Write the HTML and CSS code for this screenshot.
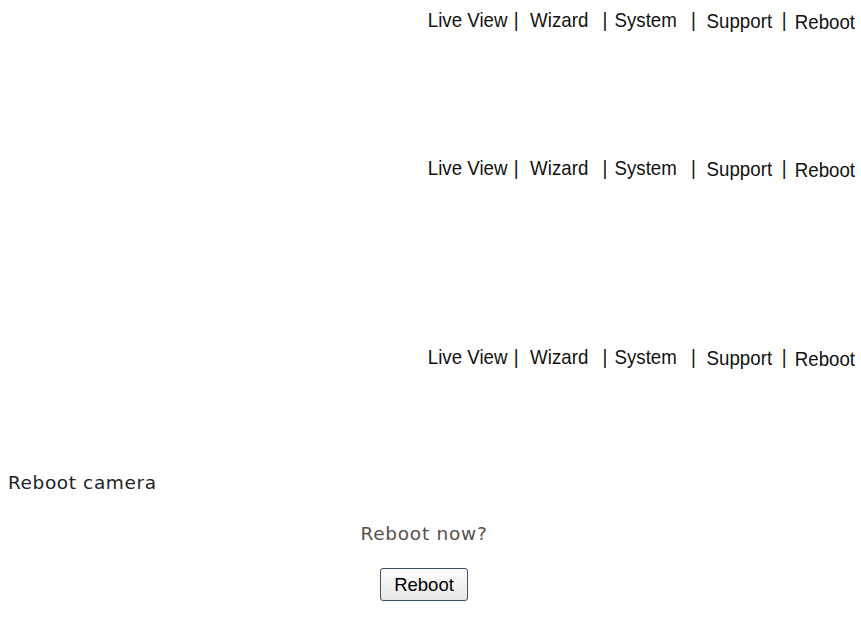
FILE: index.html
```html
<!DOCTYPE html>
<html>
<head>
<meta charset="utf-8">
<title>Reboot</title>
<link rel="stylesheet" href="styles.css">
</head>
<body>
<div class="nav nav-1">
  <div class="nav-inner">
    <span class="item i1">Live View</span><span class="sep s1">|</span><span class="item i2">Wizard</span><span class="sep s2">|</span><span class="item i3">System</span><span class="sep s3">|</span><span class="item i4">Support</span><span class="sep s4">|</span><span class="item i5">Reboot</span>
  </div>
</div>
<div class="nav nav-2">
  <div class="nav-inner">
    <span class="item i1">Live View</span><span class="sep s1">|</span><span class="item i2">Wizard</span><span class="sep s2">|</span><span class="item i3">System</span><span class="sep s3">|</span><span class="item i4">Support</span><span class="sep s4">|</span><span class="item i5">Reboot</span>
  </div>
</div>
<div class="nav nav-3">
  <div class="nav-inner">
    <span class="item i1">Live View</span><span class="sep s1">|</span><span class="item i2">Wizard</span><span class="sep s2">|</span><span class="item i3">System</span><span class="sep s3">|</span><span class="item i4">Support</span><span class="sep s4">|</span><span class="item i5">Reboot</span>
  </div>
</div>
<div class="title">Reboot camera</div>
<div class="confirm">
  <div class="question">Reboot now?</div>
  <button class="btn" type="button">Reboot</button>
</div>
</body>
</html>
```

FILE: styles.css
```css
html, body {
  margin: 0;
  padding: 0;
  background: #fff;
}
body {
  padding: 0 6px 0 8px;
  font-family: "Liberation Sans", Arial, sans-serif;
}
.nav {
  display: flex;
  justify-content: flex-end;
  height: 28px;
}
.nav-inner {
  display: flex;
  align-items: flex-start;
  flex: none;
  font-family: "Liberation Sans", Arial, sans-serif;
  font-size: 21px;
  line-height: 24px;
  color: #111;
  white-space: nowrap;
  transform: scaleX(0.89);
  transform-origin: right center;
}
.nav-1 { margin-top: 8px; }
.nav-2 { margin-top: 120px; }
.nav-3 { margin-top: 161px; }
.s1 { margin: 0 13px 0 7px; }
.s2 { margin: 0 8px 0 16px; }
.s3 { margin: 0 12px 0 16px; }
.s4 { margin: 0 9px 0 11px; }
.i4 { margin-top: 1px; }
.i5 { margin-top: 2px; }
.title {
  margin-top: 99px;
  font-family: "DejaVu Sans", Verdana, sans-serif;
  font-size: 18.5px;
  line-height: 22px;
  letter-spacing: 0.6px;
  color: #222;
}
.confirm {
  display: flex;
  flex-direction: column;
  align-items: center;
  margin: 28px 15px 0 0;
}
.question {
  font-family: "DejaVu Sans", Verdana, sans-serif;
  font-size: 18.5px;
  line-height: 24px;
  letter-spacing: 0.75px;
  color: #5a5048;
}
.btn {
  margin-top: 22px;
  font-family: "Liberation Sans", Arial, sans-serif;
  font-size: 18.5px;
  line-height: 21px;
  color: #000;
  padding: 5px 13px;
  border: 1px solid #3d4f66;
  border-radius: 3px;
  background: linear-gradient(#fdfdfd, #e6e6e6);
}
```
